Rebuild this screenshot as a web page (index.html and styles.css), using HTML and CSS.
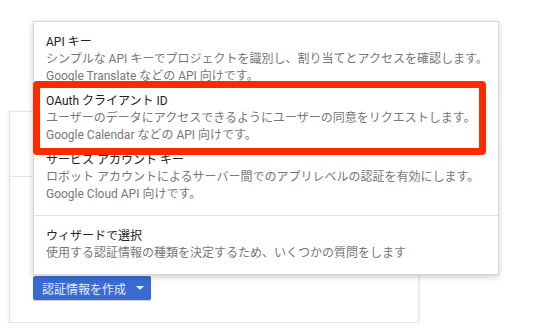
FILE: index.html
```html
<!DOCTYPE html>
<html lang="ja">
<head>
    <meta charset="UTF-8">
    <meta name="viewport" content="width=device-width, initial-scale=1.0">
    <title>認証情報</title>
    <link rel="stylesheet" href="styles.css">
</head>
<body>
    <div class="card">
        <div class="card-header"></div>
        <div class="card-body">
            <div class="create-wrap">
                <!-- Dropdown opened above the button -->
                <div class="menu">
                    <div class="menu-section">
                        <div class="menu-item">
                            <div class="item-title">API キー</div>
                            <div class="item-desc">シンプルな API キーでプロジェクトを識別し、割り当てとアクセスを確認します。</div>
                            <div class="item-desc">Google Translate などの API 向けです。</div>
                        </div>
                        <div class="menu-item">
                            <div class="item-title">OAuth クライアント ID</div>
                            <div class="item-desc">ユーザーのデータにアクセスできるようにユーザーの同意をリクエストします。</div>
                            <div class="item-desc">Google Calendar などの API 向けです。</div>
                        </div>
                        <div class="menu-item">
                            <div class="item-title">サービス アカウント キー</div>
                            <div class="item-desc">ロボット アカウントによるサーバー間でのアプリレベルの認証を有効にします。</div>
                            <div class="item-desc">Google Cloud API 向けです。</div>
                        </div>
                    </div>
                    <div class="menu-section">
                        <div class="menu-item">
                            <div class="item-title">ウィザードで選択</div>
                            <div class="item-desc">使用する認証情報の種類を決定するため、いくつかの質問をします</div>
                        </div>
                    </div>
                    <!-- annotation box -->
                    <div class="highlight"></div>
                </div>
                <button class="create-btn" type="button">認証情報を作成<span class="caret"></span></button>
            </div>
        </div>
    </div>
</body>
</html>
```

FILE: styles.css
```css
body {
    margin: 0;
    background-color: #fff;
    font-family: Roboto, "Noto Sans CJK JP", sans-serif;
}

.card {
    margin: 111px 0 0 9px;
    width: 408px;
    height: 210px;
    border: 1px solid #e4e4e4;
    box-shadow: 0 1px 3px rgba(0, 0, 0, 0.12);
    background-color: #fff;
}

.card-header {
    height: 64px;
    border-bottom: 1px solid #e4e4e4;
}

.card-body {
    padding: 99px 23px 0;
}

.create-wrap {
    position: relative;
    display: inline-block;
}

.create-btn {
    display: flex;
    align-items: center;
    height: 24px;
    width: 118px;
    padding: 0 0 0 9px;
    border: none;
    border-radius: 2px;
    background-color: #3a6bd0;
    color: #e6ecf8;
    font-family: Roboto, "Noto Sans CJK JP", sans-serif;
    font-size: 12px;
    box-shadow: 0 1px 1px rgba(0, 0, 0, 0.2);
}

.caret {
    margin-left: 10px;
    width: 0;
    height: 0;
    border-left: 4px solid transparent;
    border-right: 4px solid transparent;
    border-top: 4px solid #e6ecf8;
}

.menu {
    position: absolute;
    left: 0;
    bottom: calc(100% + 1px);
    width: 464px;
    background-color: #fff;
    border: 1px solid #d6d6d6;
    box-shadow: 0 2px 6px rgba(0, 0, 0, 0.2);
    z-index: 2;
}

.menu-section {
    padding: 8px 0;
}

.menu-section + .menu-section {
    border-top: 1px solid #e2e2e2;
}

.menu-item {
    padding: 4px 12px;
    line-height: 17px;
    font-size: 12px;
    white-space: nowrap;
}

.item-title {
    color: #212121;
}

.item-desc {
    color: #777;
}

.highlight {
    position: absolute;
    left: -1px;
    top: 59px;
    width: 453px;
    height: 74px;
    box-sizing: border-box;
    border: 7px solid #ff2a00;
    border-radius: 4px;
}
```
